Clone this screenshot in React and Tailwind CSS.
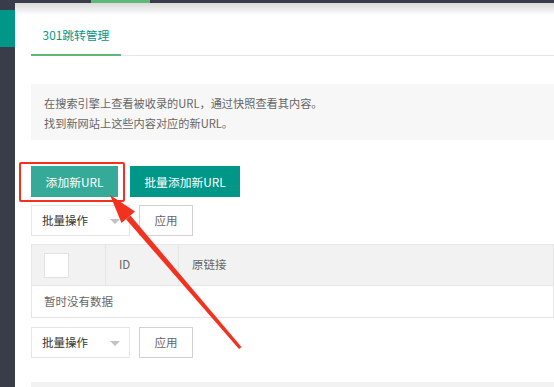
import React from "react";

const font = { fontFamily: '"Noto Sans CJK SC", "Noto Sans", sans-serif' };

const BulkRow = () => (
  <div className="flex h-[31px]">
    <div className="relative flex w-[99px] items-center border border-[#e6e6e6] bg-white pl-[10px] text-[11.5px] text-[#333]">
      批量操作
      <span className="absolute right-[9px] top-[13px] h-0 w-0 border-x-[5px] border-t-[5px] border-x-transparent border-t-[#c2c2c2]" />
    </div>
    <div className="ml-[9px] flex w-[54px] items-center justify-center border border-[#d2d2d2] bg-white text-[11.5px] text-[#666]">
      应用
    </div>
  </div>
);

export default function App() {
  return (
    <div className="relative h-[387px] w-full overflow-hidden bg-white" style={font}>
      <div className="relative h-[3px] bg-[#393d49]">
        <div className="absolute left-[91px] top-0 h-[3px] w-[59px] bg-[#5fb878]" />
      </div>
      <div className="flex h-[384px]">
        <div className="w-[15px] shrink-0 bg-[#393d49] pt-[7px]">
          <div className="h-[37px] bg-[#009688]" />
        </div>
        <div className="relative flex-1 pl-[16px]">
          <div className="absolute inset-x-0 top-0 h-[12px] bg-linear-to-b from-[#d9d9d9] to-white" />
          <div className="relative pt-[12px]">
            <div className="flex h-[41px] border-b border-[#e6e6e6]">
              <div className="flex h-[41px] w-[90px] items-center justify-center border-b-2 border-[#5fb878] text-[11.8px] text-[#009688]">
                301跳转管理
              </div>
            </div>
          </div>

          <div className="mt-[28px] h-[56px] bg-[#f7f7f7] pl-[13px] pt-[9px] text-[11.2px] leading-[20px] text-[#666]">
            <p>在搜索引擎上查看被收录的URL，通过快照查看其内容。</p>
            <p>找到新网站上这些内容对应的新URL。</p>
          </div>

          <div className="mt-[26px] flex h-[31px] gap-[12px]">
            <div className="relative">
              <div className="flex h-[31px] w-[87px] items-center justify-center bg-[#35aa98] text-[11.8px] text-white">
                添加新URL
              </div>
              <div className="absolute left-[-12px] top-[-4px] h-[40px] w-[106px] rounded-[2px] border-[2.5px] border-[#f2321f]" />
            </div>
            <div className="flex h-[31px] w-[110px] items-center justify-center bg-[#009688] text-[11.8px] text-white">
              批量添加新URL
            </div>
          </div>

          <div className="mt-[8px]">
            <BulkRow />
          </div>

          <div className="mt-[8px] border border-[#e6e6e6] text-[11.5px] text-[#666]">
            <div className="flex h-[40px] bg-[#f2f2f2]">
              <div className="flex w-[74px] items-center border-r border-[#e6e6e6] pl-[12px]">
                <div className="h-[25px] w-[25px] border border-[#e2e2e2] bg-white" />
              </div>
              <div className="flex w-[73px] items-center border-r border-[#e6e6e6] pl-[13px]">ID</div>
              <div className="flex flex-1 items-center pl-[13px]">原链接</div>
            </div>
            <div className="flex h-[32px] items-center border-t border-[#e6e6e6] pl-[12px]">暂时没有数据</div>
          </div>

          <div className="mt-[9px]">
            <BulkRow />
          </div>

          <div className="mt-[24px] h-[6px] bg-[#f2f2f2]" />
        </div>
      </div>

      <svg className="pointer-events-none absolute left-0 top-0" width="554" height="387">
        <polygon points="239,349 241.5,347 130.4,215.6 126,219.2" fill="#f2321f" />
        <polygon points="110,195 135,211.5 121.5,223" fill="#f2321f" />
      </svg>
    </div>
  );
}
